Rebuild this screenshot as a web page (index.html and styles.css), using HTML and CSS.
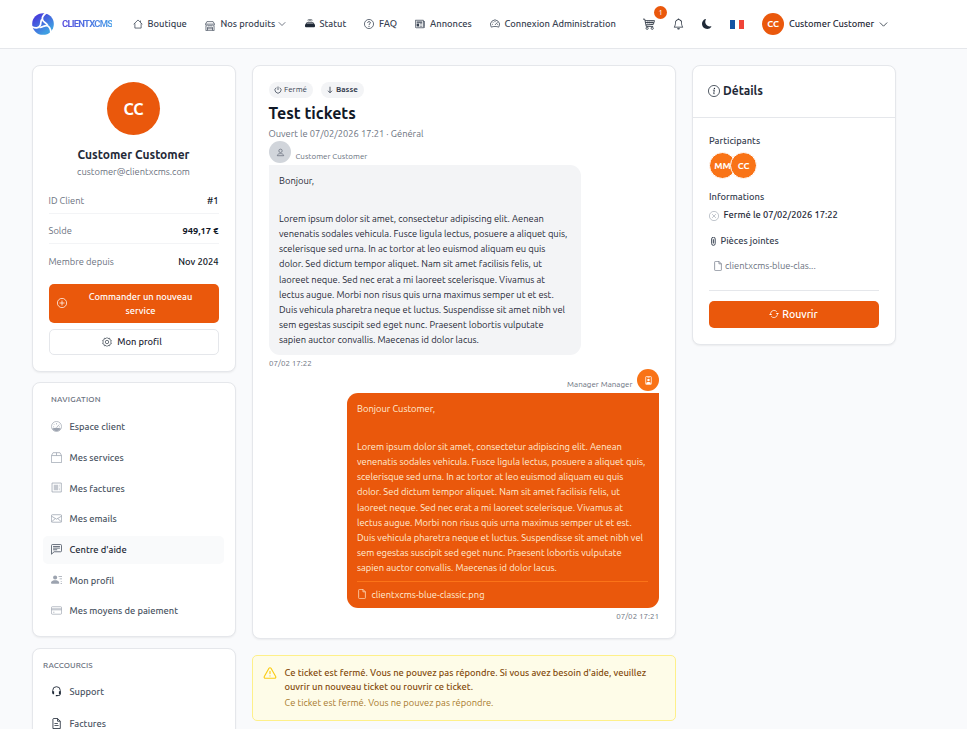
FILE: index.html
```html
<!DOCTYPE html>
<html lang="fr">
<head>
  <meta charset="UTF-8" />
  <meta name="viewport" content="width=device-width, initial-scale=1.0" />
  <title>Test tickets - CLIENTXCMS</title>
  <link rel="stylesheet" href="styles.css">
</head>
<body>

  <!-- Icons -->
  <svg class="sprite" xmlns="http://www.w3.org/2000/svg">
    <defs>
      <linearGradient id="logo-gradient" gradientUnits="userSpaceOnUse" x1="5" y1="4" x2="17" y2="20">
        <stop offset="0" stop-color="#4740dc" />
        <stop offset="1" stop-color="#3f9fe2" />
      </linearGradient>
    </defs>
    <symbol id="chevron" viewBox="0 0 16 16"><path d="M1.500 4.500 8 11l6.500-6.500" fill="none" stroke="currentColor" stroke-width="1.400" /></symbol>
    <symbol id="house" viewBox="0 0 16 16"><path d="M1 8.500 8 1.500l7 7M3 7v7.500h10V7M12 5V2.500" fill="none" stroke="currentColor" stroke-width="1.200" /></symbol>
    <symbol id="shop" viewBox="0 0 16 16"><path d="M3 1h10l2.500 4.500a2 2 0 0 1-3.700 1 2.200 2.200 0 0 1-3.800 0 2.200 2.200 0 0 1-3.800 0 2 2 0 0 1-3.700-1zM1 5h14M1.500 8v7.500h13V8M4 15v-5h8v5M4 12.500h8" fill="none" stroke="currentColor" stroke-width="1.100" /></symbol>
    <symbol id="router" viewBox="0 0 16 16"><path d="M5.500 3.500a4 4 0 0 1 5 0M4 2a6 6 0 0 1 8 0" fill="none" stroke="currentColor" /><path d="M3 5h10l3 4v2.500a1.500 1.500 0 0 1-1.500 1.500h-13A1.500 1.500 0 0 1 0 11.500V9z" /><path d="M3.500 6h9l1.300 2H2.200z" fill="#fff" opacity=".4" /></symbol>
    <symbol id="question" viewBox="0 0 16 16"><circle cx="8" cy="8" r="7.300" fill="none" stroke="currentColor" stroke-width="1.200" /><path d="M5.800 6.200C5.900 3.500 10.300 3.600 10.200 6c0 1.500-2.200 1.700-2.200 3.500" fill="none" stroke="currentColor" stroke-width="1.400" /><circle cx="8" cy="11.700" r=".9" /></symbol>
    <symbol id="news" viewBox="0 0 16 16"><path d="M.6 2h12.800v12H2A1.400 1.400 0 0 1 .6 12.600zM13.400 4h2v8.500a1.500 1.500 0 0 1-1.500 1.500" fill="none" stroke="currentColor" stroke-width="1.200" /><path d="M2.500 4h9v2h-9zM2.500 7h4v5h-4zM7.500 7h4v1h-4zM7.500 9h4v1h-4zM7.500 11h4v1h-4z" /></symbol>
    <symbol id="gauge" viewBox="0 0 16 16"><path d="M2 13A7.300 7.300 0 1 1 14 13C10 11.500 6 11.500 2 13zM8 3v2M3 8.500h1.500M11.500 8.500H13M4.300 4.800l1 1M8 9.500l4-4.300" fill="none" stroke="currentColor" stroke-width="1.200" /></symbol>
    <symbol id="gauge-fill" viewBox="0 0 16 16"><path d="M8 .7A7.300 7.300 0 1 0 8 15.300 7.300 7.300 0 0 0 8 .7zM8 3v2M3 8.500h1.500M11.500 8.500H13M4.300 4.800l1 1M8 9.500l4-4.300" fill="none" stroke="currentColor" stroke-width="1" /><path d="M1.500 11C5 9.300 11 9.300 14.500 11A7.500 7.500 0 0 1 1.500 11z" /></symbol>
    <symbol id="cart" viewBox="0 0 16 16"><path d="M0 1.500h2.300L4.300 11.200H13.500M2.800 3.500h12.500l-1.500 5L4 9.200M3.300 6h11" fill="none" stroke="currentColor" stroke-width="1.100" /><path d="M6.500 3.500v5M9.200 3.500v5M12 3.500v5" fill="none" stroke="currentColor" stroke-width=".6" /><circle cx="5.500" cy="13.700" r="1.500" fill="none" stroke="currentColor" /><circle cx="12.300" cy="13.700" r="1.500" fill="none" stroke="currentColor" /></symbol>
    <symbol id="bell" viewBox="0 0 16 16"><path d="M8 16a2 2 0 0 0 2-2H6a2 2 0 0 0 2 2M8 1.918l-.797.161A4 4 0 0 0 4 6c0 .628-.134 2.197-.459 3.742-.16.767-.376 1.566-.663 2.258h10.244c-.287-.692-.502-1.490-.663-2.258C12.134 8.197 12 6.628 12 6a4 4 0 0 0-3.203-3.920zM14.220 12c.223.447.481.801.780 1H1c.299-.199.557-.553.780-1C2.680 10.200 3 6.880 3 6c0-2.420 1.720-4.440 4.005-4.901a1 1 0 1 1 1.990 0A5 5 0 0 1 13 6c0 .880.320 4.200 1.220 6" /></symbol>
    <symbol id="moon" viewBox="0 0 16 16"><path d="M6 .278a.770.770 0 0 1 .080.858 7.200 7.200 0 0 0-.878 3.460c0 4.021 3.278 7.277 7.318 7.277q.792-.001 1.533-.160a.790.790 0 0 1 .810.316.730.730 0 0 1-.031.893A8.350 8.350 0 0 1 8.344 16C3.734 16 0 12.286 0 7.710 0 4.266 2.114 1.312 5.124.060A.750.750 0 0 1 6 .278" /></symbol>
    <symbol id="plus" viewBox="0 0 16 16"><path d="M8 .6a7.400 7.400 0 1 0 0 14.800A7.400 7.400 0 0 0 8 .6zM8 4v8M4 8h8" fill="none" stroke="currentColor" stroke-width="1.200" /></symbol>
    <symbol id="gear" viewBox="0 0 16 16"><path d="M8 .8l1.500 1.700 2.700-.5.500 2.500 2.200.9L14 8l1 2.600-2.300.9-.5 2.500-2.700-.5L8 15.200l-1.500-1.700-2.700.5-.5-2.500L1 10.600 2 8 1 5.400l2.300-.9.5-2.500 2.700.5z" fill="none" stroke="currentColor" stroke-width="1" /><circle cx="8" cy="8" r="2.700" fill="none" stroke="currentColor" stroke-width="1" /></symbol>
    <symbol id="box" viewBox="0 0 16 16"><path d="M.6 5.200 3 1h10l2.400 4.200v10.200H.6zM.6 5.200h14.800M8 1v4" fill="none" stroke="currentColor" stroke-width="1.100" /></symbol>
    <symbol id="invoice" viewBox="0 0 16 16"><path d="M1.500 1.500h13.500v13H1.500z" fill="none" stroke="currentColor" stroke-width="1.100" /><path d="M4 4h6.500v8H4zM12 4h1v1.300h-1zM12 6.500h1v1.300h-1zM12 9h1v3h-1z" opacity=".6" /></symbol>
    <symbol id="mail" viewBox="0 0 16 16"><path d="M2 2.500h12A1.400 1.400 0 0 1 15.400 4v8a1.400 1.400 0 0 1-1.400 1.400H2A1.400 1.400 0 0 1 .6 12V4A1.400 1.400 0 0 1 2 2.500zM.6 4.500 8 9l7.400-4.500M.8 12.800l5.500-4.800M15.200 12.800 9.700 8" fill="none" stroke="currentColor" stroke-width="1.100" /></symbol>
    <symbol id="chat" viewBox="0 0 16 16"><path d="M2 .8h12A1.300 1.300 0 0 1 15.300 2v8a1.300 1.300 0 0 1-1.300 1.300H4.500L.7 14.800V2A1.300 1.300 0 0 1 2 .8zM3 3.700h10M3 6h10M3 8.400h6" fill="none" stroke="currentColor" stroke-width="1.200" /></symbol>
    <symbol id="contact" viewBox="0 0 16 16"><path d="M6 8a3 3 0 1 0 0-6 3 3 0 0 0 0 6m-5 6s-1 0-1-1 1-4 6-4 6 3 6 4-1 1-1 1zM11 3h5v1h-5zM12.500 6.500H16v1h-3.500zM14 10h2v1h-2zM14 13h2v1h-2z" /></symbol>
    <symbol id="card" viewBox="0 0 16 16"><path d="M2 2.500h12A1.400 1.400 0 0 1 15.400 4v8a1.400 1.400 0 0 1-1.400 1.400H2A1.400 1.400 0 0 1 .6 12V4A1.400 1.400 0 0 1 2 2.500zM.6 5.500h14.800M.6 7h14.800M3 10.500h2" fill="none" stroke="currentColor" /></symbol>
    <symbol id="headset" viewBox="0 0 16 16"><path d="M2.500 10V6.500a5.500 5.500 0 0 1 11 0v5.300a2 2 0 0 1-2 2H8.500" fill="none" stroke="currentColor" stroke-width="1.300" /><path d="M2 7.500h2.500v4.500H3A1 1 0 0 1 2 11zM11.500 7.500H14V11a1 1 0 0 1-1 1h-1.500zM7 13h2.500v1.800H7z" /></symbol>
    <symbol id="file-text" viewBox="0 0 16 16"><path d="M3.500.7h6l4 4v10.600h-10.700V1.500zM9.500.7v4h4" fill="none" stroke="currentColor" stroke-width="1.200" /><path d="M5 7.500h5v1.300H5zM5 10h6v1.300H5z" /></symbol>
    <symbol id="power" viewBox="0 0 16 16"><path d="M8 1v7M4.500 3.300a6 6 0 1 0 7 0" fill="none" stroke="currentColor" stroke-width="1.500" /></symbol>
    <symbol id="arrow-down" viewBox="0 0 16 16"><path d="M8 1.500v12M4 9.500l4 4 4-4" fill="none" stroke="currentColor" stroke-width="1.700" /></symbol>
    <symbol id="person" viewBox="0 0 16 16"><circle cx="8" cy="5" r="3" fill="none" stroke="currentColor" stroke-width="1.400" /><path d="M2.300 13.700c0-5 11.400-5 11.400 0z" fill="none" stroke="currentColor" stroke-width="1.400" /></symbol>
    <symbol id="badge" viewBox="0 0 16 16"><path d="M4 1h8a1 1 0 0 1 1 1v12a1 1 0 0 1-1 1H4a1 1 0 0 1-1-1V2a1 1 0 0 1 1-1z" fill="none" stroke="currentColor" stroke-width="1.300" /><path d="M6 2.500h4v1H6zM8 5a2.200 2.200 0 1 0 0 4.400A2.200 2.200 0 0 0 8 5zM4 14v-2c1.500-2 6.500-2 8 0v2z" /></symbol>
    <symbol id="file" viewBox="0 0 16 16"><path d="M4 .6h5.500L13.400 4.500V14a1.400 1.400 0 0 1-1.400 1.400H4A1.400 1.400 0 0 1 2.600 14V2A1.400 1.400 0 0 1 4 .6zM9.500.6v3.900h3.900" fill="none" stroke="currentColor" stroke-width="1.100" /></symbol>
    <symbol id="info" viewBox="0 0 16 16"><circle cx="8" cy="8" r="7.400" fill="none" stroke="currentColor" stroke-width="1" /><path d="M6.600 6.900h1.900L7.500 11.600h1.400" fill="none" stroke="currentColor" stroke-width="1" /><circle cx="8.600" cy="4.600" r=".9" /></symbol>
    <symbol id="x-circle" viewBox="0 0 16 16"><path d="M8 .6a7.400 7.400 0 1 0 0 14.800A7.400 7.400 0 0 0 8 .6zM5 5l6 6M11 5l-6 6" fill="none" stroke="currentColor" /></symbol>
    <symbol id="clip" viewBox="0 0 16 16"><path d="M4.700 3.500a3 3 0 0 1 6.300 0v8.200a3.100 3.100 0 0 1-6.300 0zM7.800 4v7.500" fill="none" stroke="currentColor" stroke-width="1.700" /></symbol>
    <symbol id="refresh" viewBox="0 0 16 16"><path d="M2.600 7A5.500 5.500 0 0 1 12.500 4.500M13.400 9a5.500 5.500 0 0 1-9.900 2.500" fill="none" stroke="currentColor" stroke-width="1.200" /><path d="M11 6.500h5L13.500 9.300zM0 9.500h5L2.500 6.700z" /></symbol>
    <symbol id="warning" viewBox="0 0 24 24"><path d="m21.730 18-8-14a2 2 0 0 0-3.480 0l-8 14A2 2 0 0 0 4 21h16a2 2 0 0 0 1.730-3M12 9v4M12 17h.010" fill="none" stroke="currentColor" stroke-width="2" stroke-linecap="round" stroke-linejoin="round" /></symbol>
  </svg>

  <header class="navbar">
    <a class="brand" href="#">
      <svg class="brand-mark" viewBox="0 0 24 24">
        <circle cx="12" cy="12" r="11.800" fill="url(#logo-gradient)" />
        <g fill="none" stroke="#fff" stroke-width="1.900">
          <path id="blade" d="M17-1C11.500 2 10 6 12.500 9c1.500 1.800 3.500 2 4.500 4.500" />
          <use href="#blade" transform="rotate(120 12 12)" />
          <use href="#blade" transform="rotate(240 12 12)" />
        </g>
      </svg>
      <span class="brand-name">CLIENTXCMS</span>
    </a>
    <nav class="menu">
      <a href="#"><svg class="icon"><use href="#house" /></svg>Boutique</a>
      <a href="#" class="menu-products"><svg class="icon icon-low"><use href="#shop" /></svg>Nos produits<svg class="icon caret"><use href="#chevron" /></svg></a>
      <a href="#" class="menu-status"><svg class="icon icon-dark"><use href="#router" /></svg>Statut</a>
      <a href="#" class="menu-faq"><svg class="icon"><use href="#question" /></svg>FAQ</a>
      <a href="#" class="menu-news"><svg class="icon"><use href="#news" /></svg>Annonces</a>
      <a href="#" class="menu-admin"><svg class="icon"><use href="#gauge" /></svg>Connexion Administration</a>
    </nav>
    <div class="tools">
      <a class="cart" href="#"><svg class="icon"><use href="#cart" /></svg><span class="cart-count">1</span></a>
      <a class="bell" href="#"><svg class="icon"><use href="#bell" /></svg></a>
      <a class="moon" href="#"><svg class="icon"><use href="#moon" /></svg></a>
      <span class="flag"></span>
      <span class="avatar avatar-small">CC</span>
      <span class="user-name">Customer Customer</span>
      <svg class="icon user-caret"><use href="#chevron" /></svg>
    </div>
  </header>

  <main class="layout">

    <aside class="column">
      <section class="panel profile">
        <span class="avatar avatar-large">CC</span>
        <h2>Customer Customer</h2>
        <p class="email">customer@clientxcms.com</p>
        <dl class="facts">
          <div><dt>ID Client</dt><dd>#1</dd></div>
          <div><dt>Solde</dt><dd class="strong">949,17 €</dd></div>
          <div><dt>Membre depuis</dt><dd>Nov 2024</dd></div>
        </dl>
        <button class="btn btn-primary btn-order"><svg class="icon"><use href="#plus" /></svg><span>Commander un nouveau<br>service</span></button>
        <button class="btn btn-outline"><svg class="icon"><use href="#gear" /></svg>Mon profil</button>
      </section>

      <section class="panel side-nav">
        <h3>NAVIGATION</h3>
        <a href="#"><svg class="icon"><use href="#gauge-fill" /></svg><span>Espace client</span></a>
        <a href="#"><svg class="icon"><use href="#box" /></svg><span>Mes services</span></a>
        <a href="#"><svg class="icon"><use href="#invoice" /></svg><span>Mes factures</span></a>
        <a href="#"><svg class="icon"><use href="#mail" /></svg><span>Mes emails</span></a>
        <a href="#" class="active"><svg class="icon"><use href="#chat" /></svg><span>Centre d'aide</span></a>
        <a href="#"><svg class="icon"><use href="#contact" /></svg><span>Mon profil</span></a>
        <a href="#"><svg class="icon"><use href="#card" /></svg><span>Mes moyens de paiement</span></a>
      </section>

      <section class="panel side-nav shortcuts">
        <h3>RACCOURCIS</h3>
        <a href="#"><svg class="icon"><use href="#headset" /></svg><span>Support</span></a>
        <a href="#"><svg class="icon"><use href="#file-text" /></svg><span>Factures</span></a>
      </section>
    </aside>

    <div class="column">
      <section class="panel ticket">
        <div class="tags">
          <span class="tag"><svg class="icon"><use href="#power" /></svg>Fermé</span>
          <span class="tag tag-strong"><svg class="icon"><use href="#arrow-down" /></svg>Basse</span>
        </div>
        <h1>Test tickets</h1>
        <p class="opened">Ouvert le 07/02/2026 17:21 · Général</p>

        <article class="message">
          <div class="author">
            <span class="author-icon"><svg class="icon"><use href="#person" /></svg></span>
            <span class="author-name">Customer Customer</span>
          </div>
          <div class="bubble">
            <p>Bonjour,</p>
            <p>Lorem ipsum dolor sit amet, consectetur adipiscing elit. Aenean<br>
              venenatis sodales vehicula. Fusce ligula lectus, posuere a aliquet quis,<br>
              scelerisque sed urna. In ac tortor at leo euismod aliquam eu quis<br>
              dolor. Sed dictum tempor aliquet. Nam sit amet facilisis felis, ut<br>
              laoreet neque. Sed nec erat a mi laoreet scelerisque. Vivamus at<br>
              lectus augue. Morbi non risus quis urna maximus semper ut et est.<br>
              Duis vehicula pharetra neque et luctus. Suspendisse sit amet nibh vel<br>
              sem egestas suscipit sed eget nunc. Praesent lobortis vulputate<br>
              sapien auctor convallis. Maecenas id dolor lacus.</p>
          </div>
          <time>07/02 17:22</time>
        </article>

        <article class="message message-staff">
          <div class="author">
            <span class="author-name">Manager Manager</span>
            <span class="author-icon"><svg class="icon"><use href="#badge" /></svg></span>
          </div>
          <div class="bubble">
            <p>Bonjour Customer,</p>
            <p>Lorem ipsum dolor sit amet, consectetur adipiscing elit. Aenean<br>
              venenatis sodales vehicula. Fusce ligula lectus, posuere a aliquet quis,<br>
              scelerisque sed urna. In ac tortor at leo euismod aliquam eu quis<br>
              dolor. Sed dictum tempor aliquet. Nam sit amet facilisis felis, ut<br>
              laoreet neque. Sed nec erat a mi laoreet scelerisque. Vivamus at<br>
              lectus augue. Morbi non risus quis urna maximus semper ut et est.<br>
              Duis vehicula pharetra neque et luctus. Suspendisse sit amet nibh vel<br>
              sem egestas suscipit sed eget nunc. Praesent lobortis vulputate<br>
              sapien auctor convallis. Maecenas id dolor lacus.</p>
            <a class="attachment" href="#"><svg class="icon"><use href="#file" /></svg>clientxcms-blue-classic.png</a>
          </div>
          <time>07/02 17:21</time>
        </article>
      </section>

      <section class="alert">
        <svg class="icon"><use href="#warning" /></svg>
        <div>
          <h3>Ce ticket est fermé. Vous ne pouvez pas répondre. Si vous avez besoin d'aide, veuillez<br>ouvrir un nouveau ticket ou rouvrir ce ticket.</h3>
          <p>Ce ticket est fermé. Vous ne pouvez pas répondre.</p>
        </div>
      </section>
    </div>

    <aside class="panel details">
      <h2><svg class="icon"><use href="#info" /></svg>Détails</h2>
      <div class="details-body">
        <h3>Participants</h3>
        <div class="participants">
          <span class="avatar">MM</span>
          <span class="avatar">CC</span>
        </div>
        <h3>Informations</h3>
        <p class="closed"><svg class="icon"><use href="#x-circle" /></svg>Fermé le 07/02/2026 17:22</p>
        <h3 class="files-title"><svg class="icon"><use href="#clip" /></svg>Pièces jointes</h3>
        <a class="file-link" href="#"><svg class="icon"><use href="#file" /></svg>clientxcms-blue-clas...</a>
        <div class="reopen">
          <button class="btn btn-primary"><svg class="icon"><use href="#refresh" /></svg>Rouvrir</button>
        </div>
      </div>
    </aside>

  </main>

</body>
</html>
```
FILE: styles.css
```css
* {
  box-sizing: border-box;
}

body {
  margin: 0;
  height: 729px;
  overflow: hidden;
  background: #f9fafc;
  color: #1f2937;
  font-family: Ubuntu, "Noto Sans", sans-serif;
  font-size: 9.333px;
  line-height: 14px;
  white-space: nowrap;
}

h1, h2, h3, p, dl, dd {
  margin: 0;
}

a {
  color: inherit;
  text-decoration: none;
}

button {
  font: inherit;
  letter-spacing: inherit;
}

.sprite {
  position: absolute;
  width: 0;
  height: 0;
}

.icon {
  flex: none;
  width: 10px;
  height: 10px;
  fill: currentColor;
}

/* Header */
.navbar {
  display: flex;
  align-items: center;
  height: 49px;
  padding-left: 32px;
  background: #fff;
  border-bottom: 1px solid #e5e7eb;
}

.brand {
  display: flex;
  align-items: center;
  width: 100.5px;
}

.brand-mark {
  width: 22px;
  height: 22px;
  margin-right: 8px;
}

.brand-name {
  font-family: Roboto, sans-serif;
  font-size: 9.5px;
  font-weight: 700;
  letter-spacing: -0.8px;
  background: linear-gradient(90deg, #5548dc, #4a9fe8);
  background-clip: text;
  color: transparent;
}

.menu {
  display: flex;
  align-items: center;
  width: 510px;
  color: #374151;
  font-weight: 500;
}

.menu a {
  display: flex;
  align-items: center;
  gap: 5px;
  width: 72.5px;
}

.menu .menu-products {
  width: 99.5px;
}

.menu .menu-products .icon-low {
  margin-right: 0.5px;
}

.menu .menu-status {
  width: 59.5px;
}

.menu .menu-faq {
  width: 51px;
}

.menu .menu-news {
  width: 74.5px;
}

.menu .icon-low {
  margin-top: 3px;
}

.menu .icon-dark {
  color: #1f2937;
}

.menu .caret {
  width: 8px;
  height: 8px;
  margin-left: -2px;
}

.tools {
  display: flex;
  align-items: center;
}

.cart {
  position: relative;
  display: flex;
  width: 30.5px;
}

.cart .icon {
  width: 12px;
  height: 12px;
}

.cart-count {
  position: absolute;
  top: -12px;
  left: 11.5px;
  width: 13px;
  height: 13px;
  border-radius: 50%;
  background: #ea580c;
  color: #fff;
  font-size: 8px;
  line-height: 13px;
  text-align: center;
}

.bell {
  display: flex;
  width: 29px;
}

.bell .icon {
  width: 11px;
  height: 12px;
}

.moon {
  display: flex;
  width: 28px;
}

.flag {
  width: 14px;
  height: 9px;
  margin-right: 18px;
  background: linear-gradient(90deg, #1454a4 33%, #fff 33%, #fff 67%, #f04438 67%);
}

.avatar {
  display: flex;
  align-items: center;
  justify-content: center;
  flex: none;
  border-radius: 50%;
  background: #ea580c;
  color: #fff;
  font-weight: 600;
}

.avatar-small {
  width: 22px;
  height: 22px;
  margin-right: 5px;
}

.user-name {
  width: 90px;
  font-weight: 500;
}

.user-caret {
  width: 9px;
  height: 9px;
}

/* Page grid */
.layout {
  display: grid;
  grid-template-columns: 204px 424px 204px;
  gap: 16px;
  align-items: start;
  padding: 16px 32px 0;
}

.panel {
  background: #fff;
  border: 1px solid #e5e7eb;
  border-radius: 8px;
  box-shadow: 0 1px 2px rgba(0, 0, 0, 0.06);
}

.btn {
  display: flex;
  align-items: center;
  justify-content: center;
  width: 170px;
  border-radius: 5px;
  font-weight: 500;
}

.btn-primary {
  border: none;
  background: #ea580c;
  color: #fff;
}

.btn-outline {
  gap: 5px;
  height: 26px;
  padding: 0 6px 0 2px;
  background: #fff;
  border: 1px solid #e5e7eb;
  color: #1f2937;
}

/* Profile card */
.profile {
  display: flex;
  flex-direction: column;
  align-items: center;
  height: 307px;
  padding-top: 16px;
}

.avatar-large {
  width: 53px;
  height: 53px;
  margin-right: 1px;
  font-size: 16px;
}

.profile h2 {
  margin: 11px 1px 0 0;
  font-size: 12px;
  font-weight: 600;
  line-height: 18px;
}

.email {
  margin-right: 1px;
  color: #6b7280;
  line-height: 16px;
}

.facts {
  width: 170px;
  margin: 4px 1px 0 0;
}

.facts div {
  display: flex;
  justify-content: space-between;
  height: 30px;
  padding-top: 10px;
  border-bottom: 1px solid #f3f4f6;
}

.facts div:last-child {
  height: 40px;
  padding-top: 11px;
  border-bottom: none;
}

.facts dt {
  color: #6b7280;
}

.facts dd {
  font-weight: 500;
  color: #111827;
}

.facts .strong {
  font-weight: 700;
}

.btn-order {
  height: 39px;
  margin-bottom: 6px;
  padding: 0 5px 0 8px;
}

.btn-order .icon {
  margin-top: -1px;
}

.btn-order span {
  flex: 1;
}

/* Side menus */
.side-nav {
  height: 255px;
  margin-top: 10px;
  padding: 10px;
}

.side-nav h3 {
  height: 14px;
  margin-bottom: 6px;
  padding-left: 8px;
  color: #6b7280;
  font-size: 8px;
  font-weight: 500;
  letter-spacing: 0.25px;
}

.side-nav a {
  display: flex;
  align-items: center;
  gap: 7.5px;
  width: 181px;
  height: 28.7px;
  margin-bottom: 2px;
  padding-left: 8px;
  border-radius: 5px;
  color: #4b5563;
  font-weight: 500;
}

.side-nav .icon {
  width: 11px;
  height: 11px;
  margin-top: -2px;
  color: #9ca3af;
}

.side-nav .active {
  background: #f9fafb;
  color: #1f2937;
}

.side-nav .active .icon {
  color: #4b5563;
}

.side-nav.shortcuts {
  margin-top: 11px;
}

.shortcuts h3 {
  margin-bottom: 5px;
  padding-left: 0;
  letter-spacing: 0.1px;
}

.shortcuts a {
  margin-bottom: 3px;
}

.shortcuts .icon {
  color: #1f2937;
}

/* Ticket */
.ticket {
  height: 574px;
  padding: 16px;
}

.tags {
  display: flex;
  gap: 8px;
}

.tag {
  display: flex;
  align-items: center;
  gap: 2px;
  height: 16px;
  padding: 0 6px 0 5px;
  border-radius: 8px;
  background: #f3f4f6;
  color: #374151;
  font-size: 8px;
}

.tag .icon {
  width: 8px;
  height: 8px;
}

.tag-strong {
  font-weight: 600;
}

.ticket h1 {
  margin: 4px 0 0 -0.5px;
  color: #111827;
  font-size: 16px;
  font-weight: 600;
  line-height: 22px;
}

.opened {
  margin: 3px 0 0 -0.5px;
  color: #6b7280;
}

.message {
  display: flex;
  flex-direction: column;
  align-items: flex-start;
  height: 228px;
}

.author {
  display: flex;
  align-items: flex-end;
  gap: 4.5px;
  height: 22px;
  margin-bottom: 2px;
}

.author-icon {
  display: flex;
  align-items: center;
  justify-content: center;
  width: 22px;
  height: 22px;
  border-radius: 50%;
  background: #d1d5db;
  color: #6b7280;
}

.author-icon .icon {
  width: 9px;
  height: 9px;
}

.author-name {
  color: #6b7280;
  font-size: 8px;
  line-height: 12px;
}

.bubble {
  width: 312px;
  height: 190px;
  padding: 8px 10px;
  border-radius: 0 11px 11px 11px;
  background: #f3f4f6;
  line-height: 15.17px;
}

.bubble p + p {
  margin-top: 22.7px;
}

.message time {
  margin-top: 2px;
  color: #6b7280;
  font-size: 8px;
}

.message-staff {
  align-items: flex-end;
}

.message-staff .author-icon {
  background: #f97316;
  color: #fff;
}

.message-staff .bubble {
  flex: none;
  height: 215px;
  border-radius: 11px 0 11px 11px;
  background: #ea580c;
  color: #ffedd5;
}

.attachment {
  display: flex;
  align-items: center;
  gap: 4.5px;
  width: 291px;
  height: 25px;
  margin-top: 6px;
  border-top: 1px solid #fb7318;
}

/* Closed ticket notice */
.alert {
  display: flex;
  height: 66px;
  margin-top: 16px;
  padding: 10px;
  border: 1px solid #fef08a;
  border-radius: 5px;
  background: #fefce8;
  color: #854d0e;
}

.alert .icon {
  width: 14px;
  height: 14px;
  margin-right: 7.5px;
  color: #facc15;
}

.alert h3 {
  font-size: 9.333px;
  font-weight: 500;
}

.alert p {
  margin-top: 2px;
  color: #a87a2c;
}

/* Details */
.details {
  height: 280px;
}

.details h2 {
  display: flex;
  align-items: center;
  gap: 3px;
  height: 52px;
  padding: 0 0 2px 15px;
  border-bottom: 1px solid #e5e7eb;
  font-size: 12px;
  font-weight: 600;
}

.details h2 .icon {
  width: 12px;
  height: 12px;
}

.details-body {
  padding: 16px;
}

.details h3 {
  color: #374151;
  font-size: 9.333px;
  font-weight: 500;
}

.participants {
  display: flex;
  height: 27px;
  margin: 4px 0 11px;
}

.participants .avatar {
  width: 27px;
  height: 27px;
  margin-right: -6px;
  border: 1px solid #fff;
  background: #f97316;
}

.closed {
  display: flex;
  align-items: center;
  gap: 4.5px;
  height: 22px;
  font-weight: 500;
}

.closed .icon {
  margin-top: 2px;
  color: #9ca3af;
}

.details .files-title {
  display: flex;
  align-items: center;
  gap: 2.5px;
  height: 16px;
  margin-top: 7px;
}

.files-title .icon {
  width: 9px;
  height: 9px;
}

.file-link {
  display: flex;
  align-items: center;
  gap: 2px;
  height: 34px;
  padding-left: 4px;
  color: #6b7280;
}

.reopen {
  margin-top: 7px;
  padding-top: 10px;
  border-top: 1px solid #e5e7eb;
}

.reopen .btn {
  gap: 3px;
  height: 27px;
  padding: 0 1px 2px 0;
  font-size: 10.667px;
}
```
